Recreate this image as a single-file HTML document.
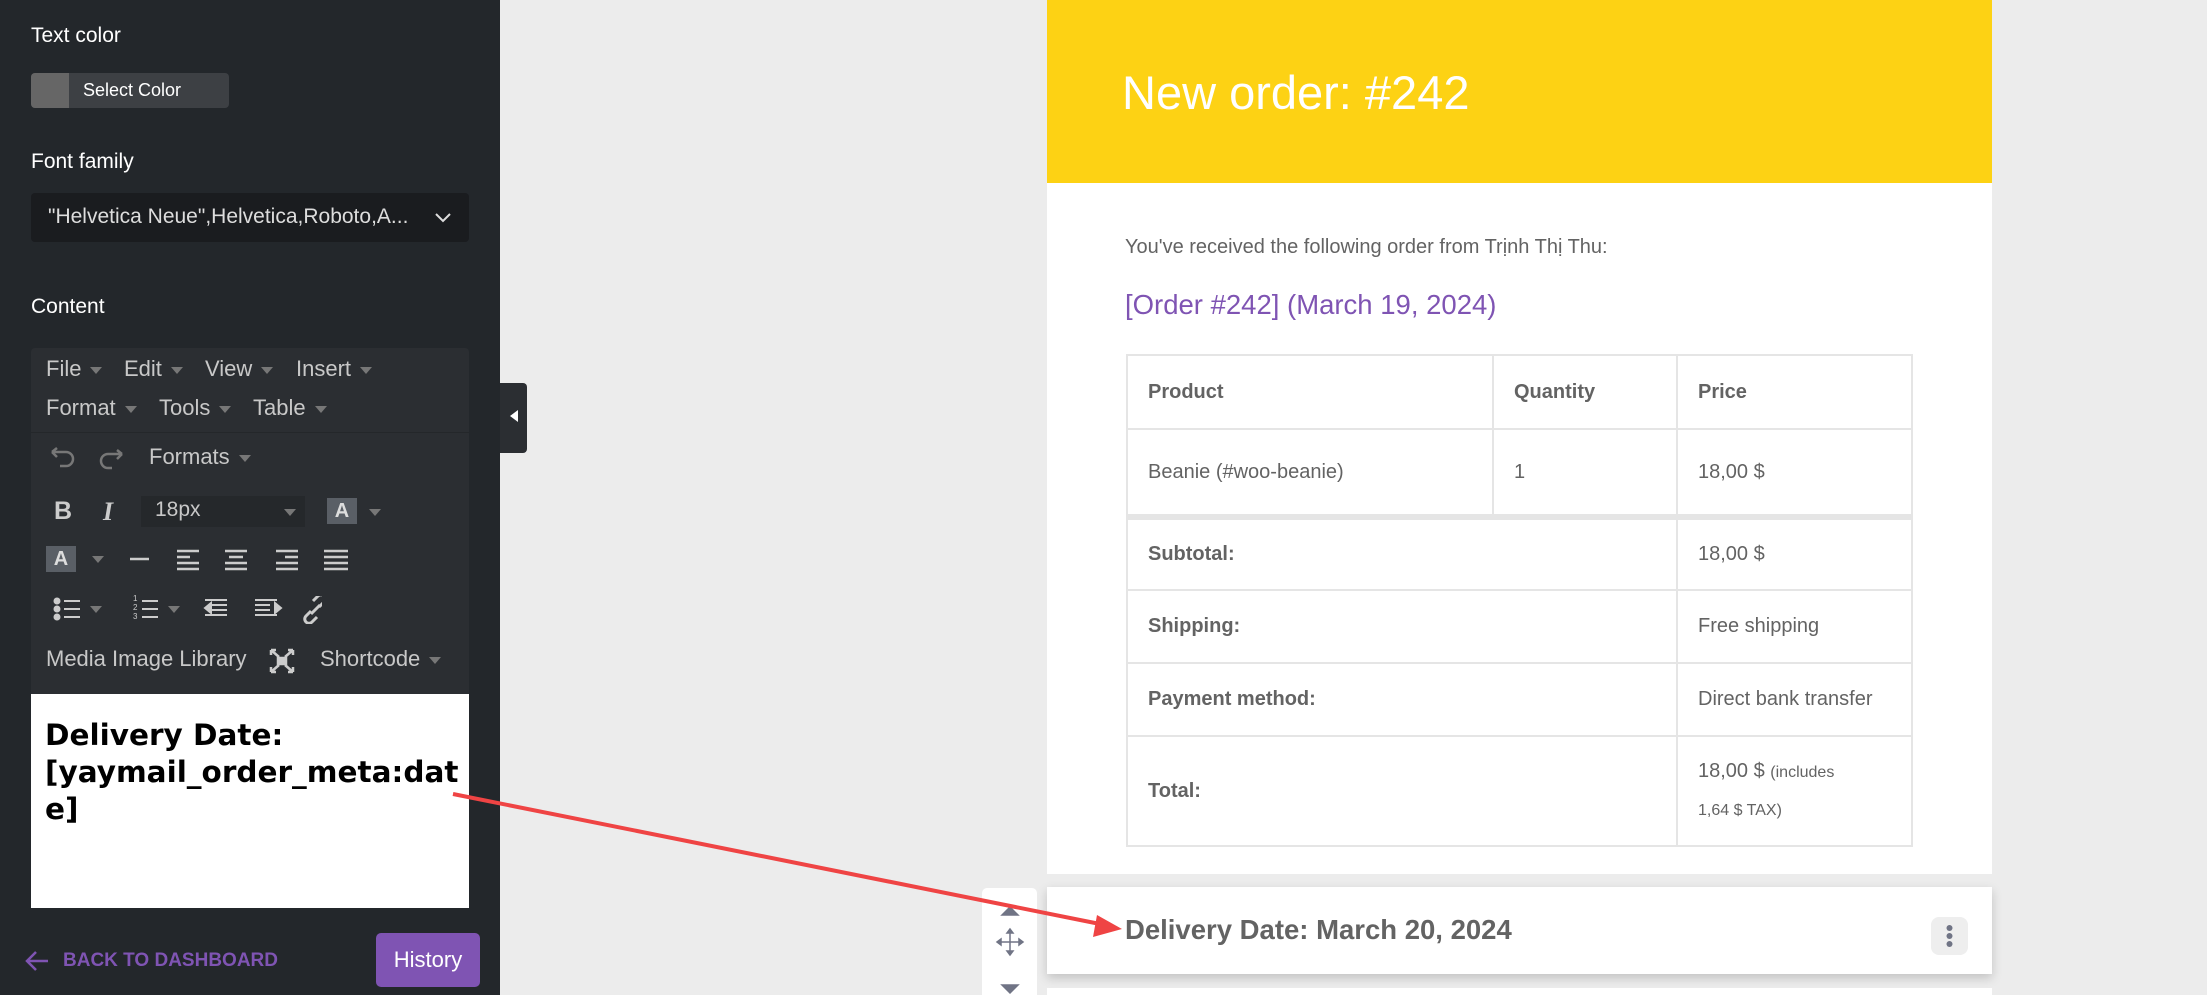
<!DOCTYPE html>
<html><head><meta charset="utf-8"><style>
*{margin:0;padding:0;box-sizing:border-box}
body{width:2207px;height:995px;overflow:hidden;background:#ececec;font-family:"Liberation Sans",Arial,sans-serif;position:relative}
.sb{position:absolute;left:0;top:0;width:500px;height:995px;background:#23272b;color:#fff}
.lbl{position:absolute;left:31px;font-size:21px;color:#fff}
.abs{position:absolute}
.menu{color:#c8c8c8;font-size:22px}
.car{display:inline-block;width:0;height:0;border-left:6px solid transparent;border-right:6px solid transparent;border-top:7px solid #777;margin-left:9px;vertical-align:middle}
.tri{position:absolute;border-left:6px solid transparent;border-right:6px solid transparent;border-top:7px solid #777}
.em{position:absolute;left:1047px;top:0;width:945px;height:874px;background:#fff}
table{border-collapse:collapse;position:absolute;left:1126px;width:787px;font-size:20px;color:#636363}
td{border:2px solid #e5e5e5;padding:0 20px}
</style></head><body>
<div class="sb">
<div class="lbl" style="top:24px">Text color</div>
<div class="abs" style="left:31px;top:73px;width:198px;height:35px;background:#3d4044;border-radius:4px"></div>
<div class="abs" style="left:31px;top:73px;width:38px;height:35px;background:#666;border-radius:4px 0 0 4px"></div>
<div class="abs" style="left:83px;top:80px;font-size:18px;color:#fff">Select Color</div>
<div class="lbl" style="top:150px">Font family</div>
<div class="abs" style="left:31px;top:193px;width:438px;height:49px;background:#1a1c1f;border-radius:4px"></div>
<div class="abs" style="left:48px;top:205px;font-size:21px;color:#ddd">"Helvetica Neue",Helvetica,Roboto,A...</div>
<svg class="abs" style="left:434px;top:210px" width="18" height="14"><path d="M2 4l7 7 7-7" stroke="#ddd" stroke-width="2" fill="none"/></svg>
<div class="lbl" style="top:295px">Content</div>
<div class="abs" style="left:31px;top:348px;width:438px;height:560px;background:#2b2e32;border-radius:4px"></div>
<div class="abs" style="left:31px;top:432px;width:438px;height:1px;background:#24272a"></div>
<div class="abs menu" style="left:46px;top:356px">File<span class="car"></span></div>
<div class="abs menu" style="left:124px;top:356px">Edit<span class="car"></span></div>
<div class="abs menu" style="left:205px;top:356px">View<span class="car"></span></div>
<div class="abs menu" style="left:296px;top:356px">Insert<span class="car"></span></div>
<div class="abs menu" style="left:46px;top:395px">Format<span class="car"></span></div>
<div class="abs menu" style="left:159px;top:395px">Tools<span class="car"></span></div>
<div class="abs menu" style="left:253px;top:395px">Table<span class="car"></span></div>
<svg class="abs" style="left:46px;top:445px" width="82" height="26"><path d="M6 7h14a7 7 0 0 1 0 14h-6M6 7l5-4M6 7l5 5" stroke="#777" stroke-width="2.5" fill="none"/><path d="M76 9H62a7 7 0 0 0 0 14h4M76 9l-5-4M76 9l-5 5" stroke="#777" stroke-width="2.5" fill="none"/></svg>
<div class="abs menu" style="left:149px;top:444px">Formats<span class="car"></span></div>
<div class="abs" style="left:54px;top:497px;font-size:25px;font-weight:bold;color:#ccc">B</div>
<div class="abs" style="left:103px;top:497px;font-size:26px;font-weight:bold;font-style:italic;font-family:'Liberation Serif',serif;color:#ccc">I</div>
<div class="abs" style="left:141px;top:496px;width:164px;height:31px;background:#25282b"></div>
<div class="abs menu" style="left:155px;top:498px;font-size:21px">18px</div>
<div class="tri" style="left:284px;top:509px"></div>
<div class="abs" style="left:327px;top:498px;width:30px;height:26px;background:#5a5f66;color:#ddd;font-weight:bold;font-size:20px;text-align:center;line-height:26px">A</div>
<div class="tri" style="left:369px;top:509px"></div>
<div class="abs" style="left:46px;top:546px;width:30px;height:26px;background:#5a5f66;color:#ddd;font-weight:bold;font-size:20px;text-align:center;line-height:26px">A</div>
<div class="tri" style="left:92px;top:556px"></div>
<svg class="abs" style="left:130px;top:547px" width="225" height="26" stroke="#ccc" stroke-width="2.5"><path d="M0 12h19"/><path d="M47 4h22M47 10h13M47 16h22M47 22h22"/><path d="M95 4h22M99 10h14M95 16h22M95 22h22"/><path d="M146 4h22M155 10h13M146 16h22M146 22h22"/><path d="M194 4h24M194 10h24M194 16h24M194 22h24"/></svg>
<svg class="abs" style="left:52px;top:596px" width="270" height="28" fill="#ccc" stroke="#ccc" stroke-width="2"><circle cx="5" cy="5" r="2.5"/><circle cx="5" cy="13" r="2.5"/><circle cx="5" cy="21" r="2.5"/><path d="M12 5h16M12 13h16M12 21h16"/><path d="M90 5h16M90 13h16M90 21h16"/><path d="M153 4h22M160 9h15M160 14h15M153 19h22M153 12l6-5v10z"/><path d="M203 4h22M203 9h15M203 14h15M203 19h22M229 12l-6-5v10z"/><path d="M259 15l-5 5a4 4 0 0 0 6 6l5-5M267 11l5-5a4 4 0 0 0-6-6l-5 5M259 18l9-9" fill="none" stroke-width="3"/></svg>
<div class="tri" style="left:90px;top:606px"></div>
<div class="tri" style="left:168px;top:606px"></div>
<div class="abs" style="left:133px;top:594px;font-size:8px;color:#ccc;line-height:9px">1<br>2<br>3</div>
<div class="abs menu" style="left:46px;top:646px;font-size:22px">Media Image Library</div>
<svg class="abs" style="left:269px;top:648px" width="26" height="26" stroke="#ccc" stroke-width="2.5" fill="none"><path d="M2 2l8 7M24 2l-8 7M2 24l8-7M24 24l-8-7M2 2h5M2 2v5M24 2h-5M24 2v5M2 24h5M2 24v-5M24 24h-5M24 24v-5"/><rect x="9" y="10" width="8" height="6" fill="#ccc"/></svg>
<div class="abs menu" style="left:320px;top:646px;font-size:22px">Shortcode<span class="car"></span></div>
<div class="abs" style="left:31px;top:694px;width:438px;height:214px;background:#fff"></div>
<div class="abs" style="left:45px;top:717px;font-family:'DejaVu Sans',sans-serif;font-weight:bold;font-size:29.5px;line-height:37px;color:#000;white-space:nowrap">Delivery Date:<br>[yaymail_order_meta:dat<br>e]</div>
<svg class="abs" style="left:24px;top:948px" width="26" height="26" stroke="#7f54b3" stroke-width="2.5" fill="none"><path d="M24 13H3M12 4l-9 9 9 9"/></svg>
<div class="abs" style="left:63px;top:950px;font-size:19px;font-weight:bold;color:#7f54b3">BACK TO DASHBOARD</div>
<div class="abs" style="left:376px;top:933px;width:104px;height:54px;background:#7f54b3;border-radius:5px;color:#fff;font-size:22px;text-align:center;line-height:54px">History</div>
</div>
<div class="abs" style="left:500px;top:383px;width:27px;height:70px;background:#2b2e32;border-radius:0 4px 4px 0"></div>
<div class="abs" style="left:510px;top:410px;border-top:6px solid transparent;border-bottom:6px solid transparent;border-right:8px solid #fff"></div>

<div class="em">
<div class="abs" style="left:0;top:0;width:945px;height:183px;background:#fdd214"></div>
<div class="abs" style="left:75px;top:65px;font-size:47px;color:#fff">New order: #242</div>
<div class="abs" style="left:78px;top:236px;font-size:20px;color:#636363">You've received the following order from Trịnh Thị Thu:</div>
<div class="abs" style="left:78px;top:289px;font-size:27.5px;color:#7f54b3">[Order #242] (March 19, 2024)</div>
</div>
<table style="top:354px">
<tr style="height:74px;font-weight:bold"><td style="width:366px">Product</td><td style="width:184px">Quantity</td><td>Price</td></tr>
<tr style="height:88px;border-bottom:6px solid #e5e5e5"><td>Beanie (#woo-beanie)</td><td>1</td><td>18,00 $</td></tr>
<tr style="height:73px"><td colspan="2" style="font-weight:bold">Subtotal:</td><td>18,00 $</td></tr>
<tr style="height:73px"><td colspan="2" style="font-weight:bold">Shipping:</td><td>Free shipping</td></tr>
<tr style="height:73px"><td colspan="2" style="font-weight:bold">Payment method:</td><td>Direct bank transfer</td></tr>
<tr style="height:110px"><td colspan="2" style="font-weight:bold">Total:</td><td style="line-height:36px">18,00 $ <span style="font-size:16px">(includes<br>1,64 $ TAX)</span></td></tr>
</table>
<div class="abs" style="left:1047px;top:887px;width:945px;height:87px;background:#fff;box-shadow:0 4px 10px rgba(0,0,0,.18)"></div>
<div class="abs" style="left:1125px;top:914px;font-size:27.5px;font-weight:bold;color:#636363">Delivery Date: March 20, 2024</div>
<div class="abs" style="left:1931px;top:917px;width:37px;height:38px;background:#eee;border-radius:8px"></div>
<svg class="abs" style="left:1931px;top:917px" width="37" height="38" fill="#707485"><circle cx="18.5" cy="11" r="3"/><circle cx="18.5" cy="19" r="3"/><circle cx="18.5" cy="27" r="3"/></svg>
<div class="abs" style="left:982px;top:888px;width:55px;height:107px;background:#fff;border-radius:5px 5px 0 0"></div>
<svg class="abs" style="left:995px;top:895px" width="30" height="100" fill="#707485" stroke="#707485" stroke-width="1.5"><path d="M7 20l8-8 8 8z"/><path d="M15 36v22M4 47h22" fill="none"/><path d="M15 34l-3 4h6zM15 60l-3-4h6zM2 47l4-3v6zM28 47l-4-3v6z"/><path d="M7 90l8 8 8-8z"/></svg>
<div class="abs" style="left:1047px;top:988px;width:945px;height:7px;background:#fff"></div>
<svg class="abs" style="left:0;top:0" width="2207" height="995"><line x1="453" y1="794" x2="1105" y2="925" stroke="#ef4444" stroke-width="4"/><path d="M1122 929l-25-14-4 22z" fill="#ef4444"/></svg>
</body></html>
